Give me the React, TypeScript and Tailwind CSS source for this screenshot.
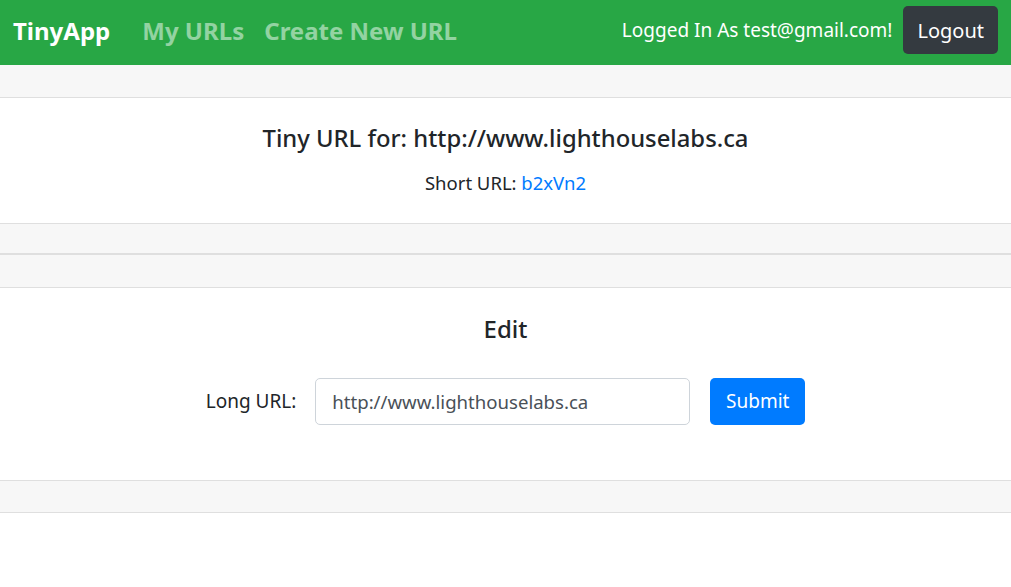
import { useState } from 'react'

const font = { fontFamily: '"Segoe UI", "Noto Sans", "Liberation Sans", sans-serif' }

function Navbar() {
  return (
    <nav className="flex h-[65px] items-start justify-between bg-[#28a745] pl-[13px] pr-[13px] pt-[6px]">
      <div className="flex h-[48px] items-center pt-[2px]">
        <a className="text-[24px] font-bold text-white">TinyApp</a>
        <a className="ml-[32px] text-[24px] font-bold text-white/50">My URLs</a>
        <a className="ml-[20px] text-[24px] font-bold text-white/50">Create New URL</a>
      </div>
      <div className="flex h-[48px] items-center">
        <span className="pt-[1px] text-[19px] text-white">Logged In As test@gmail.com!</span>
        <button className="ml-[11px] h-[48px] rounded-[5px] bg-[#343a40] px-[14px] pt-[1px] text-[20px] text-white">
          Logout
        </button>
      </div>
    </nav>
  )
}

export default function App() {
  const [longUrl, setLongUrl] = useState('http://www.lighthouselabs.ca')

  return (
    <div className="min-h-[587px] bg-white text-[#212529]" style={font}>
      <Navbar />

      {/* Short URL card */}
      <section>
        <div className="h-[33px] border-b border-[#dfdfdf] bg-[#f7f7f7]" />
        <div className="flex h-[126px] flex-col items-center border-b border-[#dfdfdf] pt-[26px]">
          <h4 className="text-[23.8px] font-medium leading-[29px]">Tiny URL for: http://www.lighthouselabs.ca</h4>
          <p className="mt-[18px] text-[18.5px] leading-[24px]">
            Short URL: <a className="text-[#007bff]">b2xVn2</a>
          </p>
        </div>
        <div className="h-[31px] border-b-2 border-[#dfdfdf] bg-[#f7f7f7]" />
      </section>

      {/* Edit card */}
      <section>
        <div className="h-[33px] border-b border-[#dfdfdf] bg-[#f7f7f7]" />
        <div className="flex h-[193px] flex-col items-center border-b border-[#dfdfdf] pt-[26px]">
          <h4 className="text-[24px] font-medium leading-[29px]">Edit</h4>
          <form className="mt-[35px] flex items-center" onSubmit={(e) => e.preventDefault()}>
            <label className="mr-[19px] text-[19px]">Long URL:</label>
            <input
              value={longUrl}
              onChange={(e) => setLongUrl(e.target.value)}
              className="h-[47px] w-[375px] rounded-[5px] border border-[#ced4da] px-[16px] text-[18.6px] text-[#495057] outline-none"
            />
            <button className="ml-[20px] h-[47px] w-[95px] rounded-[5px] bg-[#007bff] text-[19px] text-white">
              Submit
            </button>
          </form>
        </div>
        <div className="h-[32px] border-b border-[#dfdfdf] bg-[#f7f7f7]" />
      </section>
    </div>
  )
}
